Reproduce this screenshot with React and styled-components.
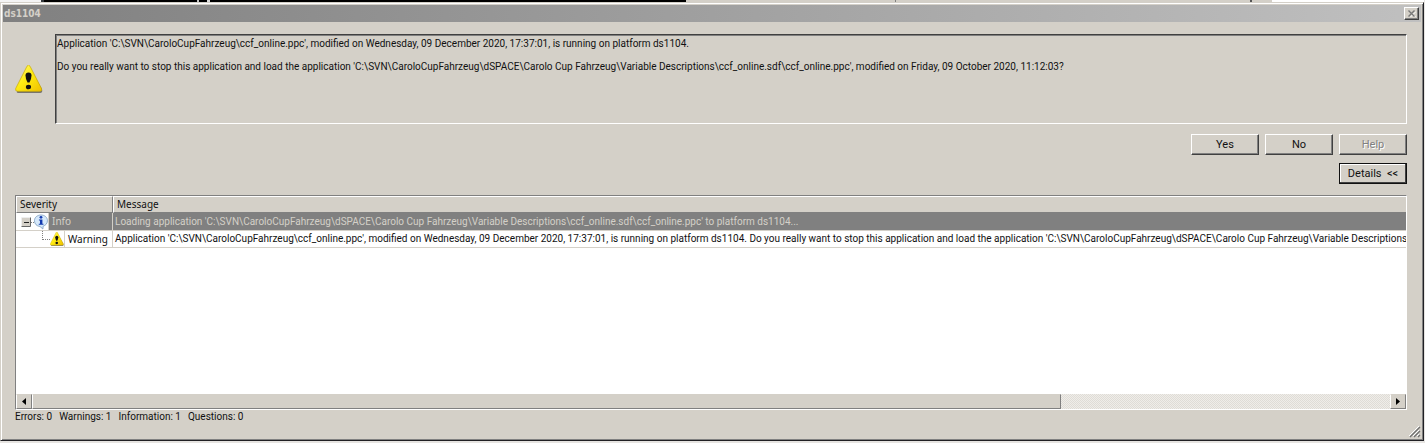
import styled, { createGlobalStyle, css, ThemeProvider } from "styled-components";

const theme = {
  face: "#d4d0c8",
  light: "#ffffff",
  shadow: "#808080",
  dark: "#404040",
  ui: 'Roboto, "Liberation Sans", Arial, sans-serif',
  grid: '"Noto Sans", sans-serif',
  title: '"DejaVu Sans Condensed", "DejaVu Sans", sans-serif',
};

const GlobalStyle = createGlobalStyle`
  * {
    box-sizing: border-box;
  }
  body {
    margin: 0;
    background: #e6e4e1;
  }
`;

const Raised = css`
  background: ${({ theme }) => theme.face};
  border: 1px solid;
  border-color: ${({ theme }) =>
    `${theme.light} ${theme.dark} ${theme.dark} ${theme.light}`};
  box-shadow: inset -1px -1px 0 ${({ theme }) => theme.shadow};
`;

const Desktop = styled.div`
  display: flex;
  flex-direction: column;
  min-height: 100vh;
  padding: 0 1px 2px 0;
`;

const Backdrop = styled.div`
  height: 2px;
  background: linear-gradient(
    90deg,
    #f4f4f4 0 41px,
    #34383c 41px 44px,
    #000 44px 197px,
    #c8c8c8 197px 199px,
    #000 199px 207px,
    #ddd 207px 210px,
    #000 210px 686px,
    #d4d0c8 686px 895px,
    #808080 895px 896px,
    #d4d0c8 896px 1250px,
    #555 1250px 1252px,
    #d4d0c8 1252px 1272px,
    #fff 1272px
  );
`;

const Window = styled.main`
  flex: 1;
  display: flex;
  flex-direction: column;
  padding: 2px;
  background: ${({ theme }) => theme.face};
  border: 1px solid ${({ theme }) => theme.face};
  border-right-color: #202024;
  border-bottom-color: #202024;
  box-shadow: inset 1px 1px 0 ${({ theme }) => theme.light},
    inset -1px -1px 0 ${({ theme }) => theme.shadow};
  color: #111;
  font: 10px/12px ${({ theme }) => theme.ui};
`;

const TitleBar = styled.header`
  display: flex;
  align-items: center;
  justify-content: space-between;
  height: 17px;
  padding: 0 2px 0 1px;
  background: linear-gradient(90deg, #808080, #c0c0c0);
`;

const Title = styled.h1`
  margin: 0;
  color: ${({ theme }) => theme.face};
  font: bold 10px/16px ${({ theme }) => theme.title};
`;

const CloseButton = styled.button`
  ${Raised}
  display: grid;
  place-items: center;
  width: 15px;
  height: 13px;
  padding: 0;
`;

const Body = styled.div`
  flex: 1;
  display: flex;
  flex-direction: column;
  padding: 12px 14px 0 12px;
`;

const Notice = styled.section`
  display: grid;
  grid-template-columns: 40px 1fr;
  align-items: center;
`;

const NoticeText = styled.div`
  min-height: 90px;
  padding: 3px 1px;
  border: 1px solid;
  border-color: ${({ theme }) =>
    `${theme.dark} ${theme.light} ${theme.light} ${theme.dark}`};
  box-shadow: inset 1px 1px 0 ${({ theme }) => theme.shadow};
`;

const Paragraph = styled.p`
  margin: 0 0 11px;
`;

const ButtonRow = styled.div`
  display: flex;
  justify-content: flex-end;
  gap: 6px;
  margin-top: ${({ $space }) => $space}px;
`;

const DialogButton = styled.button`
  ${Raised}
  width: 68px;
  height: 21px;
  padding: 0;
  color: #111;
  font: 11px/12px ${({ theme }) => theme.ui};
  white-space: pre;
  ${({ $active, theme }) =>
    $active &&
    `
      border-color: #111;
      box-shadow: inset -1px -1px 0 ${theme.dark}, inset 1px 1px 0 ${theme.light};
    `}
  &:disabled {
    color: ${({ theme }) => theme.shadow};
    text-shadow: 1px 1px 0 ${({ theme }) => theme.light};
  }
`;

const ListFrame = styled.section`
  flex: 1;
  display: flex;
  flex-direction: column;
  margin-top: 11px;
  background: #fff;
  border: 1px solid;
  border-color: ${({ theme }) =>
    `${theme.shadow} ${theme.light} ${theme.light} ${theme.shadow}`};
`;

const Table = styled.table`
  width: 100%;
  table-layout: fixed;
  border-collapse: separate;
  border-spacing: 0;
  font: 10px/16px ${({ theme }) => theme.grid};
`;

const HeadCell = styled.th`
  height: 17px;
  padding: 0 3px;
  background: ${({ theme }) => theme.face};
  border: 1px solid ${({ theme }) => theme.light};
  border-width: 1px 0 0 1px;
  border-bottom: 1px solid ${({ theme }) => theme.shadow};
  font-weight: normal;
  line-height: 15px;
  text-align: left;
  &:first-child {
    width: 97px;
    border-right: 1px solid ${({ theme }) => theme.shadow};
  }
`;

const Cell = styled.td`
  height: ${({ $selected }) => ($selected ? 18 : 17)}px;
  padding: 0 ${({ $tree }) => ($tree ? 0 : 2)}px;
  overflow: hidden;
  white-space: nowrap;
  border-bottom: 1px solid ${({ theme }) => theme.face};
  border-right: ${({ $tree, theme }) => ($tree ? `1px solid ${theme.face}` : 0)};
  background: ${({ $selected, $tree, theme }) =>
    $selected && !$tree ? theme.shadow : "#fff"};
  color: ${({ $selected, theme }) => ($selected ? theme.face : "#111")};
  font-family: ${({ $tree, theme }) => ($tree ? theme.grid : theme.ui)};
`;

const TreeItem = styled.div`
  display: flex;
  align-items: center;
  height: ${({ $selected }) => ($selected ? 17 : 16)}px;
  padding-left: ${({ $indent }) => $indent}px;
`;

const TreeLabel = styled.span`
  flex: 1;
  align-self: stretch;
  padding-left: 3px;
  border-left: 1px solid ${({ theme }) => theme.face};
  background: ${({ $selected, theme }) => ($selected ? theme.shadow : "#fff")};
`;

const ScrollBar = styled.div`
  display: flex;
  height: 15px;
  margin-top: auto;
  background: repeating-conic-gradient(#efede9 0 25%, #dfdcd6 0 50%) 0 0 / 2px 2px;
`;

const ScrollPart = styled.button`
  display: grid;
  place-items: center;
  width: ${({ $width }) => $width || "16px"};
  margin-left: ${({ $end }) => ($end ? "auto" : 0)};
  padding: 0;
  background: ${({ theme }) => theme.face};
  border: 1px solid;
  border-color: ${({ theme }) =>
    `${theme.face} ${theme.shadow} ${theme.shadow} ${theme.light}`};
`;

const StatusBar = styled.footer`
  display: flex;
  gap: 7px;
  padding-top: 1px;
`;

const GripRow = styled.div`
  display: flex;
  justify-content: flex-end;
  margin-top: 3px;
`;

const WarningIcon = ({ size }) => (
  <svg width={size} height={size} viewBox="0 0 28 28" aria-hidden="true">
    <defs>
      <linearGradient id={`warn${size}`} x2="1" y2="1">
        <stop offset="0" stopColor="#fff98a" />
        <stop offset=".45" stopColor="#ffed12" />
        <stop offset="1" stopColor="#efc000" />
      </linearGradient>
    </defs>
    <path
      d="M14.5 2.5 27 24q1 4-2 4H4q-3 0-2-2z"
      fill="#66645e"
      opacity=".85"
    />
    <path
      d="M12 1.2q1.5-2.4 3 0L26.5 23.500q.8 2.800-1.800 2.800H2.500Q0 26.300.7 23.500z"
      fill={`url(#warn${size})`}
      stroke="#c9a900"
      strokeWidth=".7"
    />
    <path d="M10.500 10.500q0-3 3-3T16.500 10.500q0 3-2 7h-2Q10.500 13.500 10.500 10.500z" fill="#111" />
    <ellipse cx="13.500" cy="22" rx="2.600" ry="2.300" fill="#111" />
  </svg>
);

const InfoIcon = () => (
  <svg width="14" height="16" viewBox="0 0 15 16" aria-hidden="true">
    <path
      d="M7.500.5c4 0 6.900 2.600 6.900 6.100 0 2.900-2 5.100-4.600 5.900L9.500 15.500 6.400 12.800C2.900 12.500.5 10 .5 6.600.5 3.100 3.500.5 7.500.5z"
      fill="#d6e9fb"
      stroke="#7f9fc0"
      strokeWidth=".9"
    />
    <circle cx="7.500" cy="3" r="1.500" fill="#123ab0" />
    <path d="M5.300 5.200h3.700v4.600h1.100v1.200H5.100V9.800h1.300V6.400H5.300z" fill="#123ab0" />
  </svg>
);

const ExpandIcon = () => (
  <svg width="13" height="16" viewBox="0 0 13 16" aria-hidden="true">
    <path d="M.5 12.500v-9h9" stroke="#eee" fill="none" />
    <path d="M1 4h8v8H1z" fill="#d4d0c8" />
    <path d="M.5 12.500h9v-9" stroke="#666" fill="none" />
    <path d="M3 8.500h5" stroke="#222" />
    <path d="M10 8.500h3" stroke="#808080" strokeDasharray="1 1" />
  </svg>
);

const BranchIcon = () => (
  <svg width="8" height="16" viewBox="0 0 8 16" aria-hidden="true">
    <path d="M.5 0v9M1 8.500h7" fill="none" stroke="#808080" strokeDasharray="1 1" />
  </svg>
);

const Arrow = ({ right }) => (
  <svg width="4" height="7" viewBox="0 0 4 7" aria-hidden="true">
    <path d={right ? "M0 0l4 3.500L0 7z" : "M4 0L0 3.500 4 7z"} fill="#000" />
  </svg>
);

const CloseIcon = () => (
  <svg width="8" height="7" viewBox="0 0 8 7" aria-hidden="true">
    <path d="M1 0.500l6 6M7 .5l-6 6" stroke="#fff" transform="translate(1 1)" />
    <path d="M.5.5l6 6M6.500.5l-6 6" stroke="#777" strokeWidth="1.400" />
  </svg>
);

const Grip = () => (
  <svg width="12" height="12" viewBox="0 0 12 12" aria-hidden="true">
    <path d="M0 10L10 0M4 10l6-6M8 10l2-2" stroke="#fff" />
    <path d="M1 11L11 1M5 11l6-6M9 11l2-2" stroke="#707070" strokeWidth="1.300" />
  </svg>
);

const rows = [
  {
    severity: "Info",
    indent: 5,
    selected: true,
    message:
      "Loading application 'C:\\SVN\\CaroloCupFahrzeug\\dSPACE\\Carolo Cup Fahrzeug\\Variable Descriptions\\ccf_online.sdf\\ccf_online.ppc' to platform ds1104...",
  },
  {
    severity: "Warning",
    indent: 26,
    message:
      "Application 'C:\\SVN\\CaroloCupFahrzeug\\ccf_online.ppc', modified on Wednesday, 09 December 2020, 17:37:01, is running on platform ds1104. Do you really want to stop this application and load the application 'C:\\SVN\\CaroloCupFahrzeug\\dSPACE\\Carolo Cup Fahrzeug\\Variable Descriptions\\ccf_",
  },
];

const MessageRow = ({ row }) => (
  <tr>
    <Cell $tree $selected={row.selected}>
      <TreeItem $indent={row.indent} $selected={row.selected}>
        {row.selected ? (
          <>
            <ExpandIcon />
            <InfoIcon />
          </>
        ) : (
          <>
            <BranchIcon />
            <WarningIcon size={14} />
          </>
        )}
        <TreeLabel $selected={row.selected}>{row.severity}</TreeLabel>
      </TreeItem>
    </Cell>
    <Cell $selected={row.selected}>{row.message}</Cell>
  </tr>
);

export default function App() {
  return (
    <ThemeProvider theme={theme}>
      <GlobalStyle />
      <Desktop>
        <Backdrop />
        <Window>
          <TitleBar>
            <Title>ds1104</Title>
            <CloseButton aria-label="Close">
              <CloseIcon />
            </CloseButton>
          </TitleBar>
          <Body>
            <Notice>
              <WarningIcon size={28} />
              <NoticeText>
                <Paragraph>
                  Application 'C:\SVN\CaroloCupFahrzeug\ccf_online.ppc', modified
                  on Wednesday, 09 December 2020, 17:37:01, is running on
                  platform ds1104.
                </Paragraph>
                <Paragraph>
                  Do you really want to stop this application and load the
                  application 'C:\SVN\CaroloCupFahrzeug\dSPACE\Carolo Cup
                  Fahrzeug\Variable Descriptions\ccf_online.sdf\ccf_online.ppc',
                  modified on Friday, 09 October 2020, 11:12:03?
                </Paragraph>
              </NoticeText>
            </Notice>
            <ButtonRow $space={10}>
              <DialogButton>Yes</DialogButton>
              <DialogButton>No</DialogButton>
              <DialogButton disabled>Help</DialogButton>
            </ButtonRow>
            <ButtonRow $space={8}>
              <DialogButton $active>{"Details  <<"}</DialogButton>
            </ButtonRow>
            <ListFrame>
              <Table>
                <thead>
                  <tr>
                    <HeadCell>Severity</HeadCell>
                    <HeadCell>Message</HeadCell>
                  </tr>
                </thead>
                <tbody>
                  {rows.map((row) => (
                    <MessageRow key={row.severity} row={row} />
                  ))}
                </tbody>
              </Table>
              <ScrollBar>
                <ScrollPart aria-label="Scroll left">
                  <Arrow />
                </ScrollPart>
                <ScrollPart $width="74%" aria-label="Scroll position" />
                <ScrollPart $end aria-label="Scroll right">
                  <Arrow right />
                </ScrollPart>
              </ScrollBar>
            </ListFrame>
            <StatusBar>
              <span>Errors: 0</span>
              <span>Warnings: 1</span>
              <span>Information: 1</span>
              <span>Questions: 0</span>
            </StatusBar>
          </Body>
          <GripRow>
            <Grip />
          </GripRow>
        </Window>
      </Desktop>
    </ThemeProvider>
  );
}
